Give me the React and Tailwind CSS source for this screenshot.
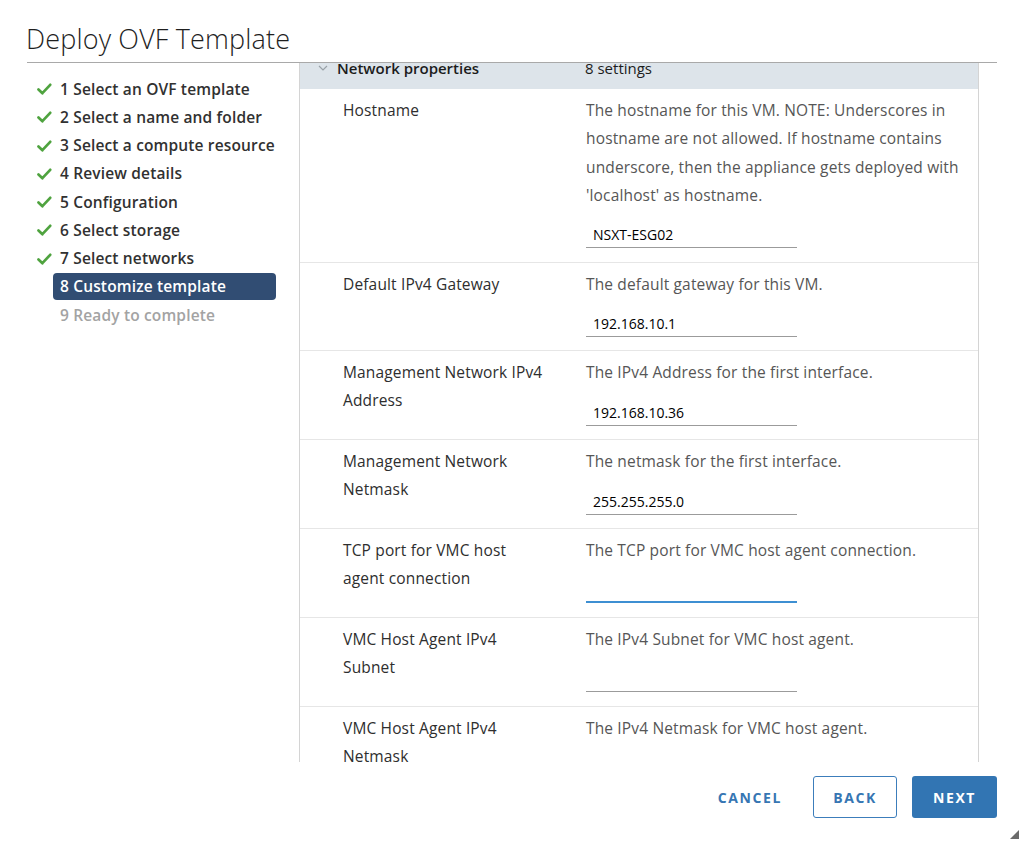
import React from 'react';

const steps = [
    { n: 1, label: 'Select an OVF template', done: true },
    { n: 2, label: 'Select a name and folder', done: true },
    { n: 3, label: 'Select a compute resource', done: true },
    { n: 4, label: 'Review details', done: true },
    { n: 5, label: 'Configuration', done: true },
    { n: 6, label: 'Select storage', done: true },
    { n: 7, label: 'Select networks', done: true },
    { n: 8, label: 'Customize template', active: true },
    { n: 9, label: 'Ready to complete', disabled: true },
];

const rows = [
    {
        label: ['Hostname'],
        desc: [
            'The hostname for this VM. NOTE: Underscores in',
            'hostname are not allowed. If hostname contains',
            'underscore, then the appliance gets deployed with',
            "'localhost' as hostname.",
        ],
        value: 'NSXT-ESG02',
    },
    { label: ['Default IPv4 Gateway'], desc: ['The default gateway for this VM.'], value: '192.168.10.1' },
    { label: ['Management Network IPv4', 'Address'], desc: ['The IPv4 Address for the first interface.'], value: '192.168.10.36' },
    { label: ['Management Network', 'Netmask'], desc: ['The netmask for the first interface.'], value: '255.255.255.0' },
    { label: ['TCP port for VMC host', 'agent connection'], desc: ['The TCP port for VMC host agent connection.'], value: '', focused: true },
    { label: ['VMC Host Agent IPv4', 'Subnet'], desc: ['The IPv4 Subnet for VMC host agent.'], value: '' },
    { label: ['VMC Host Agent IPv4', 'Netmask'], desc: ['The IPv4 Netmask for VMC host agent.'], value: '' },
];

const Check = () => (
    <svg width="15" height="12" viewBox="0 0 15 12" className="shrink-0">
        <path d="M1.5 6.5 L5.4 10.2 L13.2 1.8" fill="none" stroke="#4fa33f" strokeWidth="2.7" strokeLinecap="round" strokeLinejoin="round" />
    </svg>
);

const font = { fontFamily: '"Open Sans", "Noto Sans", sans-serif' };

export default function App() {
    return (
        <div className="relative w-[1024px] h-[846px] bg-white overflow-hidden text-[#313131]" style={font}>
            {/* 标题 */}
            <div className="h-[62px] pl-[26px] pt-[22px]">
                <h1 className="text-[27px] leading-[34px] font-light tracking-[0.15px] text-[#1f1f1f]">Deploy OVF Template</h1>
            </div>
            <div className="mx-[27px] border-t border-[#a9a9a9]" />

            <div className="flex h-[699px]">
                {/* 左侧步骤导航 */}
                <div className="w-[272px] ml-[27px] pl-[10px] pt-[12px]">
                    {steps.map((s) => (
                        <div key={s.n} className="flex items-center h-[28.25px]">
                            <div className="w-[16px] flex items-center">{s.done && <Check />}</div>
                            <div
                                className={
                                    s.active
                                        ? 'w-[223px] h-[27px] rounded-[4px] bg-[#314d73] text-white pl-[7px] text-[15.5px] tracking-[0.15px] font-semibold leading-[27px]'
                                        : `w-[223px] pl-[7px] text-[15.5px] tracking-[0.15px] font-semibold leading-[27px] ${s.disabled ? 'text-[#a3a3a3]' : 'text-[#313131]'}`
                                }
                            >
                                {s.n} {s.label}
                            </div>
                        </div>
                    ))}
                </div>

                {/* 右侧属性列表 */}
                <div className="w-[680px] h-[699px] border-l border-r border-[#d4d4d4] overflow-hidden">
                    <div className="-mt-[16px]">
                        <div className="flex items-center h-[42px] bg-[#dde4ea] text-[15px] text-[#1c1c1c]">
                            <div className="w-[37px] flex justify-end pr-[9px]">
                                <svg width="10" height="6" viewBox="0 0 10 6">
                                    <path d="M1 1 L5 5 L9 1" fill="none" stroke="#9aa2a8" strokeWidth="1.2" />
                                </svg>
                            </div>
                            <div className="w-[248px] font-semibold">Network properties</div>
                            <div>8 settings</div>
                        </div>
                        {rows.map((r, i) => (
                            <div key={i} className="flex pl-[43px] pt-[7px] pb-[13.6px] border-b border-[#e6e6e6]">
                                <div className="w-[243px] text-[15.5px] tracking-[0.15px] font-medium leading-[28px] text-[#2e2e2e]">
                                    {r.label.map((l, j) => (
                                        <div key={j}>{l}</div>
                                    ))}
                                </div>
                                <div className="flex-1">
                                    <div className="text-[15.5px] tracking-[0.15px] leading-[28.25px] text-[#565656]">
                                        {r.desc.map((d, j) => (
                                            <div key={j}>{d}</div>
                                        ))}
                                    </div>
                                    <div
                                        className={`mt-[14px] w-[211px] h-[25px] pl-[7px] text-[14px] leading-[24px] text-black ${r.focused ? 'border-b-2 border-[#3d8fd2]' : 'border-b border-[#9b9b9b]'}`}
                                    >
                                        {r.value}
                                    </div>
                                </div>
                            </div>
                        ))}
                    </div>
                </div>
            </div>

            {/* 底部按钮 */}
            <div className="flex justify-end items-center gap-[15px] pr-[27px] pt-[14px]">
                <button className="h-[42px] px-[16px] text-[14px] font-bold tracking-[1.6px] text-[#3776b3]">CANCEL</button>
                <button className="h-[42px] w-[84px] rounded-[3px] border border-[#3c7dbb] text-[14px] font-bold tracking-[1.6px] text-[#3776b3]">BACK</button>
                <button className="h-[42px] w-[85px] rounded-[3px] bg-[#3275b3] text-[14px] font-bold tracking-[1.6px] text-white">NEXT</button>
            </div>

            {/* 右下角缩放手柄 */}
            <svg className="absolute right-[5px] bottom-[7px]" width="9" height="9" viewBox="0 0 9 9">
                <path d="M9 0 L9 9 L0 9 Z" fill="#6b6b6b" />
            </svg>
        </div>
    );
}
